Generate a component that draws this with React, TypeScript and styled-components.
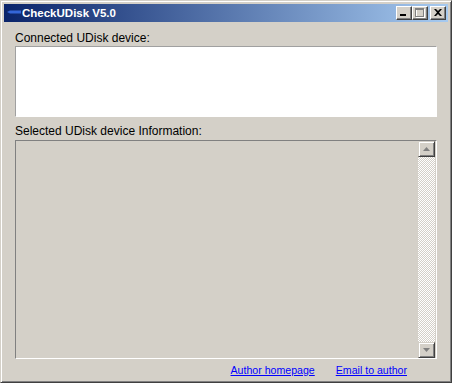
import React from 'react'
import styled, { createGlobalStyle } from 'styled-components'

const GlobalStyle = createGlobalStyle`
  html, body {
    margin: 0;
    padding: 0;
    background: #d4d0c8;
  }
  * {
    box-sizing: border-box;
  }
`

const App = () => {
  return (
    <>
      <GlobalStyle />
      <Window>
        <TitleBar>
          <AppIcon width="16" height="16" viewBox="0 0 16 16">
            <path d="M1 7 L4 5.5 L15 5.5 L15 8.5 L4 8.5 Z" fill="#3466d8" />
          </AppIcon>
          <TitleText>CheckUDisk V5.0</TitleText>
          <TitleButtons>
            <CaptionButton>
              <svg width="8" height="7" viewBox="0 0 8 7">
                <rect x="0" y="5" width="6" height="2" fill="#000" />
              </svg>
            </CaptionButton>
            <CaptionButton>
              <svg width="10" height="10" viewBox="0 0 10 10">
                <rect x="1.5" y="1.5" width="8" height="8" fill="none" stroke="#fff" />
                <rect x="0.5" y="0.5" width="8" height="8" fill="none" stroke="#808080" />
                <rect x="0" y="0" width="9" height="2" fill="#808080" />
              </svg>
            </CaptionButton>
            <CaptionButton $spaced>
              <svg width="8" height="7" viewBox="0 0 8 7">
                <path d="M0 0 L2 0 L4 2 L6 0 L8 0 L5 3.5 L8 7 L6 7 L4 5 L2 7 L0 7 L3 3.5 Z" fill="#000" />
              </svg>
            </CaptionButton>
          </TitleButtons>
        </TitleBar>

        <Content>
          <Label>Connected UDisk device:</Label>
          <DeviceList />

          <Label $top={7}>Selected UDisk device Information:</Label>
          <InfoBox>
            <InfoText />
            <ScrollBar>
              <ArrowButton>
                <svg width="7" height="5" viewBox="0 0 7 5">
                  <path d="M3.5 0 L7 4 L0 4 Z" fill="#808080" />
                </svg>
              </ArrowButton>
              <Track />
              <ArrowButton>
                <svg width="7" height="5" viewBox="0 0 7 5">
                  <path d="M0 0 L7 0 L3.5 4 Z" fill="#808080" />
                </svg>
              </ArrowButton>
            </ScrollBar>
          </InfoBox>

          <Links>
            <LinkItem href="#">Author homepage</LinkItem>
            <LinkItem href="#">Email to author</LinkItem>
          </Links>
        </Content>
      </Window>
    </>
  )
}

const Window = styled.div`
  width: 452px;
  height: 383px;
  display: flex;
  flex-direction: column;
  background: #d4d0c8;
  border: 1px solid;
  border-color: #d4d0c8 #404040 #404040 #d4d0c8;
  box-shadow: inset 1px 1px #ffffff, inset -1px -1px #808080;
  padding: 3px;
  font-family: 'Liberation Sans', Arial, sans-serif;
  overflow: hidden;
`

const TitleBar = styled.div`
  height: 18px;
  display: flex;
  align-items: center;
  padding: 0 2px 0 2px;
  background: linear-gradient(to right, #0a246a, #a6caf0);
`

const AppIcon = styled.svg`
  flex: none;
`

const TitleText = styled.div`
  color: #ffffff;
  font-weight: 700;
  font-size: 11.5px;
  line-height: 14px;
  flex: 1;
  white-space: nowrap;
`

const TitleButtons = styled.div`
  display: flex;
  align-items: center;
`

const CaptionButton = styled.div<{ $spaced?: boolean }>`
  width: 16px;
  height: 14px;
  margin-left: ${(p) => (p.$spaced ? '2px' : '0')};
  display: flex;
  align-items: center;
  justify-content: center;
  background: #d4d0c8;
  border: 1px solid;
  border-color: #ffffff #404040 #404040 #ffffff;
  box-shadow: inset -1px -1px #808080;
  padding-bottom: 1px;
`

const Content = styled.div`
  flex: 1;
  display: flex;
  flex-direction: column;
  padding: 9px 11px 0 11px;
`

const Label = styled.div<{ $top?: number }>`
  margin-top: ${(p) => p.$top ?? 0}px;
  font-size: 12px;
  line-height: 14px;
  color: #000;
  white-space: nowrap;
`

const DeviceList = styled.div`
  margin-top: 1px;
  height: 71px;
  background: #ffffff;
  border: 1px solid;
  border-color: #a0a0a0 #ffffff #ffffff #a0a0a0;
`

const InfoBox = styled.div`
  margin-top: 2px;
  height: 219px;
  display: flex;
  background: #d4d0c8;
  border: 1px solid;
  border-color: #808080 #ffffff #ffffff #808080;
`

const InfoText = styled.div`
  flex: 1;
`

const ScrollBar = styled.div`
  width: 17px;
  display: flex;
  flex-direction: column;
  margin-right: 1px;
`

const ArrowButton = styled.div`
  height: 16px;
  display: flex;
  align-items: center;
  justify-content: center;
  background: #d4d0c8;
  border: 1px solid;
  border-color: #d4d0c8 #404040 #404040 #d4d0c8;
  box-shadow: inset 1px 1px #ffffff, inset -1px -1px #808080;
`

const Track = styled.div`
  flex: 1;
  background: repeating-conic-gradient(#ffffff 0 25%, #d4d0c8 0 50%) 0 0 / 2px 2px;
`

const Links = styled.div`
  display: flex;
  justify-content: flex-end;
  gap: 21px;
  margin-top: 5px;
  padding-right: 30px;
`

const LinkItem = styled.a`
  font-size: 10.6px;
  line-height: 13px;
  color: #0000ff;
  text-decoration: underline;
  white-space: nowrap;
`

export default App
